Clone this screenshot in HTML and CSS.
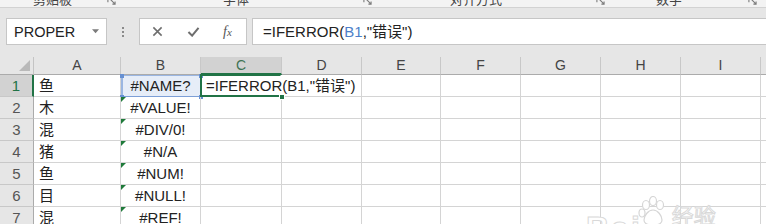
FILE: index.html
```html
<!DOCTYPE html>
<html lang="zh">
<head>
<meta charset="utf-8">
<title>Excel IFERROR</title>
<link rel="stylesheet" href="styles.css">
</head>
<body>
<div class="app">
  <div class="ribbon">
    <div class="grp g-clip"><span class="glabel">剪贴板</span><svg class="launcher" viewBox="0 0 10 10"><path d="M1 1h6M1 1v6" /><path d="M4 4l5 5M9 6v3H6" /></svg></div>
    <div class="grp g-font"><span class="glabel">字体</span><svg class="launcher" viewBox="0 0 10 10"><path d="M1 1h6M1 1v6" /><path d="M4 4l5 5M9 6v3H6" /></svg></div>
    <div class="grp g-align"><span class="glabel">对齐方式</span><svg class="launcher" viewBox="0 0 10 10"><path d="M1 1h6M1 1v6" /><path d="M4 4l5 5M9 6v3H6" /></svg></div>
    <div class="grp g-num"><span class="glabel">数字</span><svg class="launcher" viewBox="0 0 10 10"><path d="M1 1h6M1 1v6" /><path d="M4 4l5 5M9 6v3H6" /></svg></div>
  </div>

  <div class="fbar">
    <div class="namebox">
      <span class="nb-text">PROPER</span>
      <svg class="nb-dd" viewBox="0 0 8 5"><path d="M0 0h8L4 4.5z"/></svg>
    </div>
    <div class="grip"><i></i><i></i><i></i></div>
    <div class="fnbox">
      <svg class="fn-icon" viewBox="0 0 12 12"><path d="M1.5 1.5l9 9M10.5 1.5l-9 9"/></svg>
      <svg class="fn-icon fn-check" viewBox="0 0 14 12"><path d="M1.5 6.5l4 4 7-8.5"/></svg>
      <span class="fx">f<span class="fx-x">x</span></span>
    </div>
    <div class="finput">=IFERROR(<span class="ref">B1</span>,"错误")</div>
  </div>

  <div class="sheet">
    <div class="corner"></div>
    <div class="hd">A</div>
    <div class="hd">B</div>
    <div class="hd hd-sel">C</div>
    <div class="hd">D</div>
    <div class="hd">E</div>
    <div class="hd">F</div>
    <div class="hd">G</div>
    <div class="hd">H</div>
    <div class="hd">I</div>
    <div class="hd hd-last"></div>

    <div class="rh rh-sel">1</div>
    <div class="c ca">鱼</div>
    <div class="c cb refcell">#NAME?<i class="h h1"></i><i class="h h2"></i><i class="h h3"></i><i class="h h4"></i></div>
    <div class="c active"><span class="sel-frame"></span><span class="fill-handle"></span><span class="active-text">=IFERROR(B1,"错误")</span></div>
    <div class="c"></div><div class="c"></div><div class="c"></div><div class="c"></div><div class="c"></div><div class="c"></div><div class="c"></div>

    <div class="rh">2</div>
    <div class="c ca">木</div>
    <div class="c cb err">#VALUE!</div>
    <div class="c"></div><div class="c"></div><div class="c"></div><div class="c"></div><div class="c"></div><div class="c"></div><div class="c"></div><div class="c"></div>

    <div class="rh">3</div>
    <div class="c ca">混</div>
    <div class="c cb err">#DIV/0!</div>
    <div class="c"></div><div class="c"></div><div class="c"></div><div class="c"></div><div class="c"></div><div class="c"></div><div class="c"></div><div class="c"></div>

    <div class="rh">4</div>
    <div class="c ca">猪</div>
    <div class="c cb err">#N/A</div>
    <div class="c"></div><div class="c"></div><div class="c"></div><div class="c"></div><div class="c"></div><div class="c"></div><div class="c"></div><div class="c"></div>

    <div class="rh">5</div>
    <div class="c ca">鱼</div>
    <div class="c cb err">#NUM!</div>
    <div class="c"></div><div class="c"></div><div class="c"></div><div class="c"></div><div class="c"></div><div class="c"></div><div class="c"></div><div class="c"></div>

    <div class="rh">6</div>
    <div class="c ca">目</div>
    <div class="c cb err">#NULL!</div>
    <div class="c"></div><div class="c"></div><div class="c"></div><div class="c"></div><div class="c"></div><div class="c"></div><div class="c"></div><div class="c"></div>

    <div class="rh">7</div>
    <div class="c ca">混</div>
    <div class="c cb err">#REF!</div>
    <div class="c"></div><div class="c"></div><div class="c"></div><div class="c"></div><div class="c"></div><div class="c"></div><div class="c"></div><div class="c"></div>
  </div>

  <div class="watermark">
    <span class="wm-bai">Bai</span>
    <svg class="wm-paw" viewBox="0 0 34 30"><ellipse cx="10" cy="9" rx="3.5" ry="4.5"/><ellipse cx="17" cy="5" rx="3.5" ry="4.5"/><ellipse cx="24" cy="9" rx="3.5" ry="4.5"/><ellipse cx="6" cy="17" rx="3" ry="4"/><path d="M17 14c5 0 9 6 9 10s-4 5-9 5-9-1-9-5 4-10 9-10z"/></svg>
    <span class="wm-jy">经验</span>
  </div>
</div>
</body>
</html>
```

FILE: styles.css
```css
* { box-sizing: border-box; }

html, body {
  margin: 0;
  padding: 0;
}

body {
  width: 766px;
  height: 224px;
  overflow: hidden;
  background: #ffffff;
  font-family: "Liberation Sans", "Noto Sans CJK SC", sans-serif;
  color: #222;
}

.app {
  position: relative;
  width: 766px;
  height: 224px;
  overflow: hidden;
}

/* ribbon bottom (cut off) */
.ribbon {
  display: flex;
  height: 8px;
  background: #f3f3f3;
  border-bottom: 1px solid #d2d2d2;
  overflow: hidden;
}

.grp {
  display: flex;
  align-items: flex-start;
}

.glabel {
  font-size: 13px;
  line-height: 13px;
  margin-top: -7px;
  color: #444;
  white-space: nowrap;
}

.launcher {
  width: 9px;
  height: 9px;
  margin-top: -4px;
  margin-left: auto;
  fill: none;
  stroke: #7a7a7a;
  stroke-width: 1.2;
}

.g-clip { width: 120px; }
.g-clip .glabel { margin-left: 33px; }
.g-clip .launcher { margin-right: 4px; }
.g-font { width: 255px; }
.g-font .glabel { margin-left: 103px; }
.g-font .launcher { margin-right: 3px; }
.g-align { width: 235px; }
.g-align .glabel { margin-left: 75px; }
.g-align .launcher { margin-right: 5px; }
.g-num { width: 156px; }
.g-num .glabel { margin-left: 46px; }
.g-num .launcher { margin-right: 9px; }

/* formula bar */
.fbar {
  display: flex;
  align-items: flex-start;
  height: 49px;
  padding-top: 10px;
  background: #e6e6e6;
}

.namebox {
  display: flex;
  align-items: center;
  width: 101px;
  height: 27px;
  margin-left: 6px;
  padding: 0 7px 0 7px;
  background: #fff;
  border: 1px solid #c6c6c6;
}

.nb-text {
  flex: 1;
  font-size: 14.5px;
  color: #222;
}

.nb-dd {
  width: 7px;
  height: 5px;
  fill: #7b7b7b;
}

.grip {
  width: 32px;
  height: 27px;
  display: flex;
  flex-direction: column;
  align-items: center;
  justify-content: center;
  gap: 2px;
}

.grip i {
  display: block;
  width: 2px;
  height: 2px;
  background: #8a8a8a;
}

.fnbox {
  display: flex;
  align-items: center;
  width: 108px;
  height: 27px;
  padding-left: 12px;
  background: #fff;
  border: 1px solid #c6c6c6;
}

.fn-icon {
  width: 11px;
  height: 11px;
  fill: none;
  stroke: #6e6e6e;
  stroke-width: 1.7;
}

.fn-check {
  width: 13px;
  margin-left: 24px;
  stroke-width: 2.2;
}

.fx {
  margin-left: 23px;
  font-family: "Liberation Serif", serif;
  font-style: italic;
  font-size: 14px;
  color: #555;
}

.fx-x {
  font-size: 11px;
}

.finput {
  flex: 1;
  height: 27px;
  margin-left: 5px;
  padding-left: 10px;
  background: #fff;
  border: 1px solid #c6c6c6;
  border-right: none;
  font-size: 15px;
  line-height: 25px;
  white-space: nowrap;
}

.ref { color: #4e7fc9; }

/* sheet grid */
.sheet {
  display: grid;
  grid-template-columns: 34px 87px 80px 81px 80px 79px 80px 80px 80px 80px 40px;
  grid-template-rows: 18px repeat(7, 22px);
  background: #fff;
}

.corner {
  position: relative;
  background: #e6e6e6;
  border-right: 1px solid #c4c4c4;
  border-bottom: 1px solid #ababab;
}

.corner::after {
  content: "";
  position: absolute;
  right: 3px;
  bottom: 3px;
  width: 0;
  height: 0;
  border-left: 11px solid transparent;
  border-bottom: 11px solid #b9b9b9;
}

.hd {
  background: #e6e6e6;
  border-right: 1px solid #c8c8c8;
  border-bottom: 1px solid #ababab;
  text-align: center;
  font-size: 14px;
  line-height: 17px;
  color: #444;
}

.hd-sel {
  background: #d2d2d2;
  color: #3f7354;
  border-bottom: 2px solid #217346;
}

.rh {
  background: #e6e6e6;
  border-right: 1px solid #ababab;
  border-bottom: 1px solid #c8c8c8;
  text-align: center;
  font-size: 15px;
  line-height: 21px;
  color: #555;
}

.rh-sel {
  background: #d2d2d2;
  color: #217346;
  border-right: 2px solid #217346;
}

.c {
  position: relative;
  border-right: 1px solid #d4d4d4;
  border-bottom: 1px solid #d4d4d4;
  font-size: 15px;
  line-height: 21px;
  padding: 0 4px;
  white-space: nowrap;
  color: #222;
}

.ca { padding-left: 5px; }

.cb { text-align: center; }

.err::before {
  content: "";
  position: absolute;
  left: 0;
  top: 0;
  width: 0;
  height: 0;
  border-top: 5px solid #1f7a3a;
  border-right: 5px solid transparent;
}

.refcell {
  background: #e6edf8;
  border-right-color: #7d9fd6;
  border-bottom-color: #7d9fd6;
  box-shadow: inset 2px 1px 0 #9ab6e2;
}

.h {
  position: absolute;
  width: 4px;
  height: 4px;
  background: #6690d2;
}
.h1 { left: -1px; top: -1px; }
.h2 { right: -3px; top: -1px; }
.h3 { left: -1px; bottom: -3px; }
.h4 { right: -3px; bottom: -3px; }

.active {
  z-index: 2;
  overflow: visible;
  padding-left: 5px;
  border-right-color: transparent;
}

.sel-frame {
  position: absolute;
  left: -1px;
  top: -1px;
  right: -1px;
  bottom: -1px;
  border: 2px solid #217346;
  border-right-color: transparent;
}

.fill-handle {
  position: absolute;
  right: -4px;
  bottom: -4px;
  width: 6px;
  height: 6px;
  background: #217346;
  border: 1px solid #fff;
}

.active-text {
  position: relative;
}

/* watermark */
.watermark {
  position: absolute;
  left: 586px;
  top: 196px;
  display: flex;
  align-items: flex-start;
  pointer-events: none;
}

.wm-bai {
  margin-top: 16px;
  font-size: 32px;
  font-weight: bold;
  line-height: 32px;
  color: #fff;
  -webkit-text-stroke: 1px #d9d9d9;
  letter-spacing: 2px;
}

.wm-paw {
  width: 34px;
  height: 30px;
  margin-left: -6px;
  fill: #fff;
  stroke: #d6d6d6;
  stroke-width: 1.2;
}

.wm-jy {
  margin-top: 10px;
  margin-left: 2px;
  font-size: 22px;
  line-height: 22px;
  color: #fff;
  -webkit-text-stroke: 1px #d9d9d9;
}
```
